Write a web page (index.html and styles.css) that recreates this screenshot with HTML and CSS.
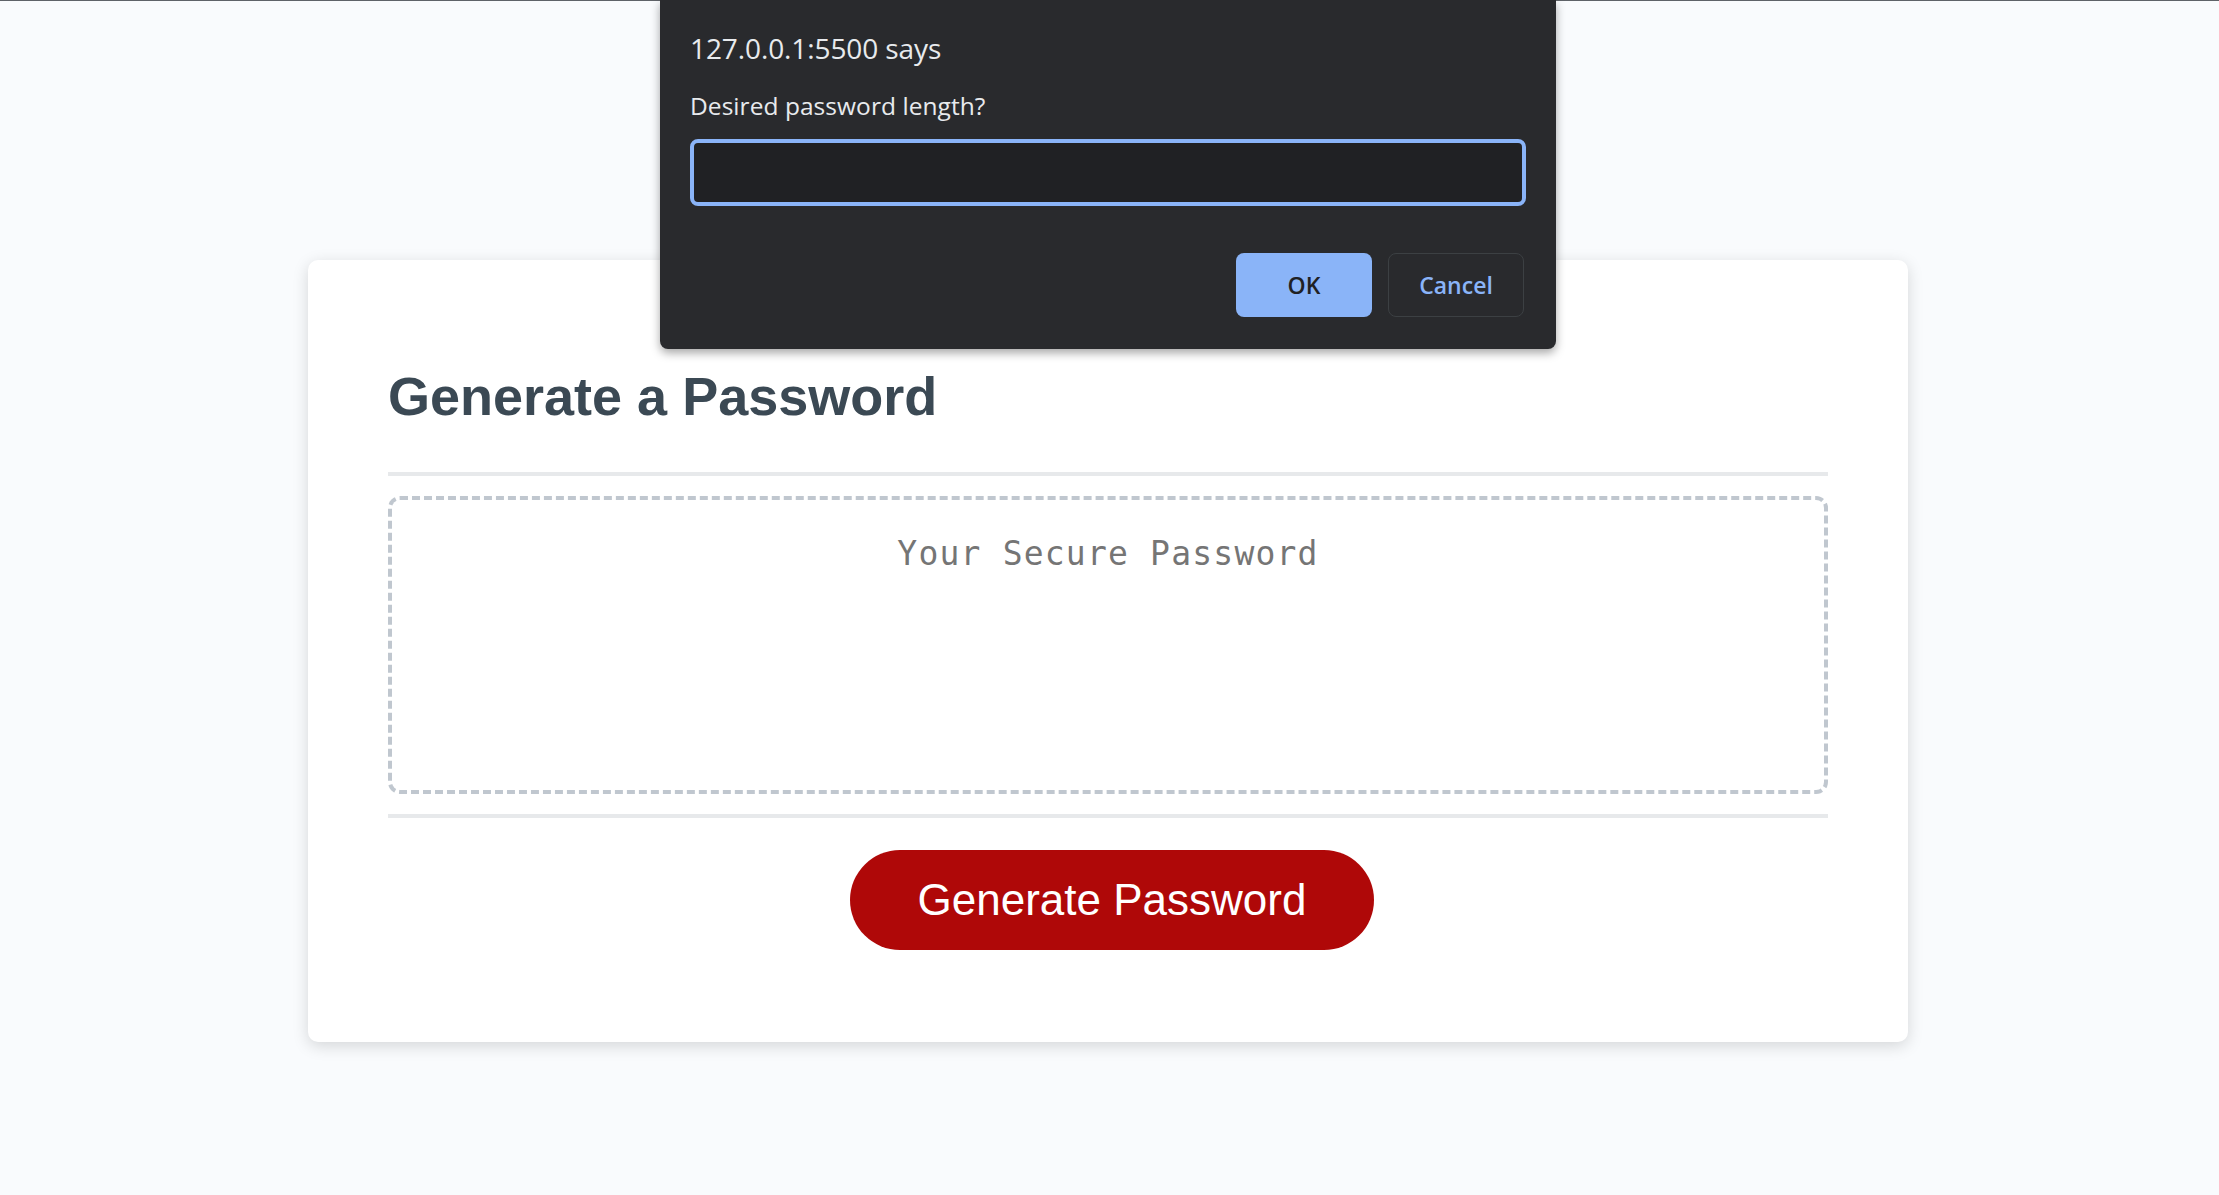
FILE: index.html
```html
<!DOCTYPE html>
<html lang="en">
<head>
  <meta charset="UTF-8">
  <meta name="viewport" content="width=device-width, initial-scale=1.0">
  <title>Password Generator</title>
  <link rel="stylesheet" href="styles.css">
</head>
<body>
  <div class="wrapper">
    <div class="card">
      <div class="card-header">
        <h2>Generate a Password</h2>
      </div>
      <div class="card-body">
        <textarea readonly id="password" placeholder="Your Secure Password" aria-label="Generated Password"></textarea>
      </div>
      <div class="card-footer">
        <button id="generate" class="btn">Generate Password</button>
      </div>
    </div>
  </div>

  <!-- browser prompt() dialog -->
  <div class="prompt" role="dialog" aria-label="Prompt">
    <div class="prompt-title">127.0.0.1:5500 says</div>
    <div class="prompt-message">Desired password length?</div>
    <input class="prompt-input" type="text" aria-label="Desired password length">
    <div class="prompt-actions">
      <button class="prompt-btn prompt-ok">OK</button>
      <button class="prompt-btn prompt-cancel">Cancel</button>
    </div>
  </div>
</body>
</html>
```

FILE: styles.css
```css
*,
*::before,
*::after {
  box-sizing: border-box;
}

html,
body {
  margin: 0;
  padding: 0;
}

html {
  border-top: 1px solid #5f6368;
}

body {
  font-family: "Liberation Sans", Arial, sans-serif;
  background-color: #f9fbfd;
  min-height: 1194px;
}

.wrapper {
  padding: 259px 40px 0 37px;
}

/* main card */
.card {
  background-color: #ffffff;
  border-radius: 10px;
  box-shadow: rgba(0, 0, 0, 0.15) 0 4px 16px 0;
  color: hsl(206, 17%, 28%);
  font-size: 36px;
  margin: 0 auto;
  max-width: 1600px;
  padding: 60px 80px;
}

.card-header h2 {
  font-size: 54px;
  font-weight: bold;
  margin: 0.83em 0;
}

.card-header::after {
  content: " ";
  display: block;
  width: 100%;
  height: 4px;
  background: #e7e9eb;
}

.card-body {
  min-height: 200px;
}

.card-body textarea {
  display: block;
  width: 100%;
  height: 298px;
  margin: 20px auto;
  padding: 34px 20px 20px;
  font-family: "DejaVu Sans Mono", "Liberation Mono", monospace;
  font-size: 33px;
  letter-spacing: 1.2px;
  line-height: 40px;
  text-align: center;
  color: #333333;
  background: #ffffff;
  border: 4px dashed #c0c7cf;
  border-radius: 12px;
  resize: none;
  overflow: hidden;
  outline: none;
}

.card-body textarea::placeholder {
  color: #757575;
  opacity: 1;
}

.card-footer {
  text-align: center;
}

.card-footer::before {
  content: " ";
  display: block;
  width: 100%;
  height: 4px;
  background: #e7e9eb;
}

.btn {
  border: none;
  background-color: hsl(360, 91%, 36%);
  border-radius: 50px;
  color: #ffffff;
  display: inline-block;
  font-family: "Liberation Sans", Arial, sans-serif;
  font-size: 44px;
  line-height: 44px;
  margin: 32px 32px 32px 40px;
  padding: 28px 68px;
  text-align: center;
  cursor: pointer;
}

/* prompt dialog */
.prompt {
  position: absolute;
  top: 0;
  left: 660px;
  width: 896px;
  padding: 30px 30px 32px;
  background: #292a2d;
  border-radius: 0 0 8px 8px;
  box-shadow: 0 4px 10px rgba(0, 0, 0, 0.35);
  font-family: "Open Sans", "Noto Sans", sans-serif;
  color: #e8eaed;
}

.prompt-title {
  font-size: 28px;
  line-height: 36px;
  letter-spacing: -0.1px;
}

.prompt-message {
  margin-top: 24px;
  font-size: 24.5px;
  line-height: 32px;
  letter-spacing: 0.05px;
}

.prompt-input {
  display: block;
  width: 100%;
  height: 67px;
  margin: 17px 0 0;
  padding: 0 16px;
  border: 4px solid #8ab4f8;
  border-radius: 8px;
  background: #202124;
  color: #e8eaed;
  font: inherit;
  font-size: 24px;
  outline: none;
}

.prompt-actions {
  display: flex;
  justify-content: flex-end;
  gap: 16px;
  margin-top: 47px;
  padding-right: 2px;
}

.prompt-btn {
  width: 136px;
  height: 64px;
  padding: 0;
  border-radius: 8px;
  font-family: inherit;
  font-size: 23px;
  font-weight: 600;
  cursor: pointer;
}

.prompt-ok {
  background: #8ab4f8;
  color: #202124;
  border: none;
}

.prompt-cancel {
  background: #292a2d;
  color: #8ab4f8;
  border: 1px solid #3c4043;
}
```
